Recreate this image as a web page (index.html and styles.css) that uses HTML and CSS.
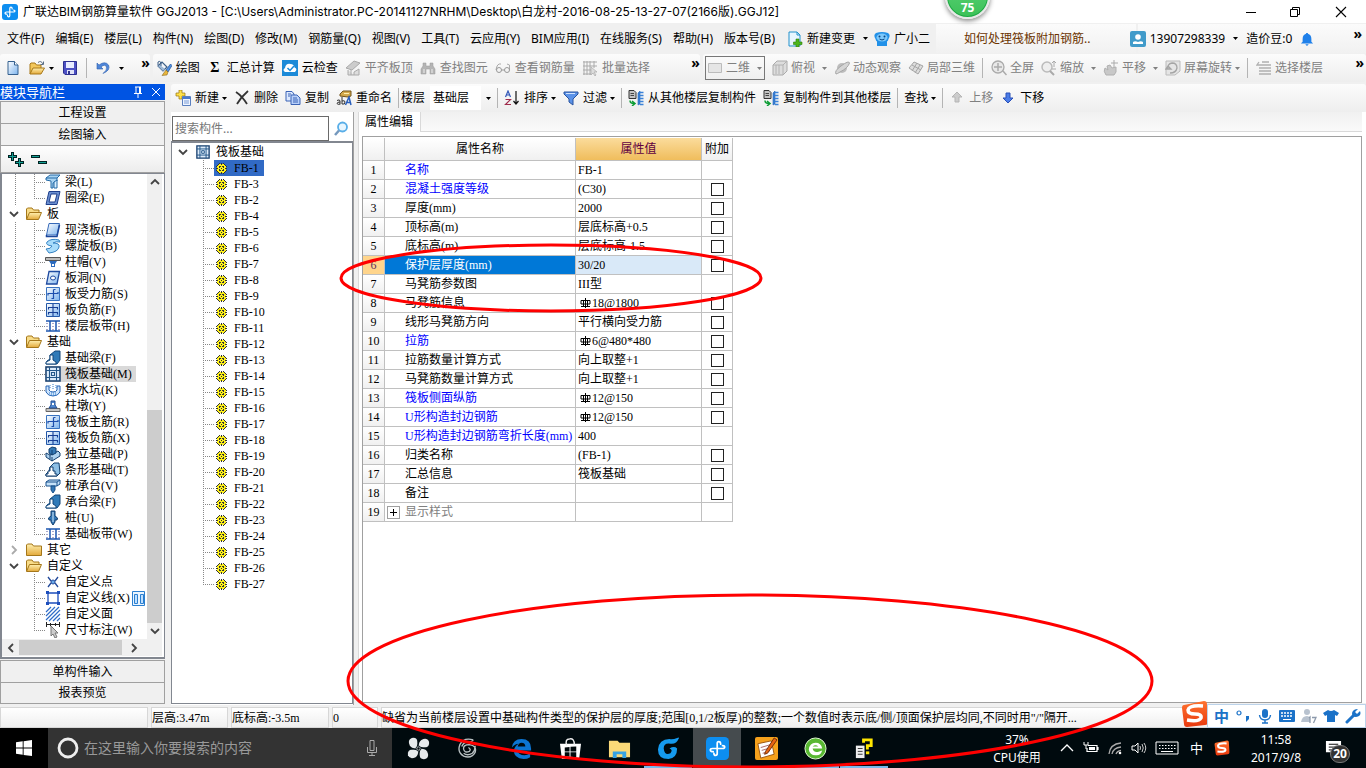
FILE: index.html
```html
<!DOCTYPE html>
<html lang="zh-CN">
<head>
<meta charset="utf-8">
<title>广联达BIM钢筋算量软件 GGJ2013</title>
<link rel="stylesheet" href="styles.css">
</head>
<body>
<svg class="defs" aria-hidden="true">
<defs>
<linearGradient id="blue" x1="0" y1="0" x2="1" y2="1"><stop offset="0" stop-color="#fff"/><stop offset="1" stop-color="#7db4ee"/></linearGradient>
<linearGradient id="gold" x1="0" y1="0" x2="0" y2="1"><stop offset="0" stop-color="#fff0b0"/><stop offset="1" stop-color="#e3a93a"/></linearGradient>
<linearGradient id="orange" x1="0" y1="0" x2="0" y2="1"><stop offset="0" stop-color="#ff7430"/><stop offset="1" stop-color="#e8380d"/></linearGradient>
<symbol id="app" viewBox="0 0 16 16"><rect width="16" height="16" rx="3" fill="#0d8ef0"/><path d="M10.200 5Q10.200 3.200 8.900 3.200Q7.800 3.200 7.800 4.500V11.500Q7.800 12.800 6.700 12.800Q5.500 12.800 5.500 11.300M5 10.200Q3 10.200 3 9Q3 8 4.500 8H11.500Q13 8 13 7Q13 6 11.500 6" fill="none" stroke="#fff" stroke-width="1.200" stroke-linecap="round"/></symbol>
<symbol id="new" viewBox="0 0 16 16"><path d="M3 1.500H9.500L13 5V14.500H3Z" fill="url(#blue)" stroke="#35608f"/><path d="M9.500 1.500V5H13" fill="#fff" stroke="#35608f"/></symbol>
<symbol id="open" viewBox="0 0 16 16"><path d="M1 14V4L2 3H6L7.500 5H12V8" fill="#f3c75a" stroke="#a8791a"/><path d="M1 14L4 8H15.500L12 14Z" fill="url(#gold)" stroke="#a8791a"/><path d="M9 2.500Q12 0 14 4M14.500 1.500V4.500H11.500" fill="none" stroke="#5a6f86"/></symbol>
<symbol id="save" viewBox="0 0 16 16"><path d="M1.500 1.500H14.500V14.500H3L1.500 13Z" fill="#4c50c4" stroke="#2d3090"/><path d="M4 2H12V8H4Z" fill="#e8ecff"/><path d="M5 10H12V14H5Z" fill="#dfe2f8"/><path d="M6 11H8V14H6Z" fill="#30338c"/></symbol>
<symbol id="undo" viewBox="0 0 16 16"><path d="M2 3V9H8L6 7Q10 3.500 11.500 7Q12.500 10 8 13.500Q16 10 13.500 5Q10 .5 4 5Z" fill="#4f86d8" stroke="#2d5fb0" stroke-width=".6"/></symbol>
<symbol id="paint" viewBox="0 0 16 16"><path d="M2 6L6 2L11 7L7 11Z" fill="#f2f5f9" stroke="#3c5f88" stroke-width="1.200"/><path d="M2 6L7 11L9 9L4 5Z" fill="#9db8d6"/><path d="M2 5V2Q4 0 5 3V6" fill="none" stroke="#3c5f88"/><path d="M14.500 4L16 5.500L12 12L10 10Z" fill="#4f8fe0" stroke="#1e4c8f" stroke-width=".7"/><path d="M10 10L12 12L11 15L6 15.500Z" fill="#e8b63c" stroke="#7a5a10" stroke-width=".5"/></symbol>
<symbol id="cloud" viewBox="0 0 16 16"><rect width="16" height="16" fill="#1c8ad8"/><path d="M3 12Q0 10 3 8Q4 3 8.500 4Q12 4 12.500 7.500Q16 9 13 12Z" fill="#fff"/><path d="M5.500 8L8 10.500L12 6" fill="none" stroke="#1c8ad8" stroke-width="1.500"/></symbol>
<symbol id="align" viewBox="0 0 16 16"><path d="M1 8L9 1L15 3L7 10Z" fill="#ccc" stroke="#aaa"/><path d="M3 10V15H14V9L9 12V15M6 10V15" fill="#ddd" stroke="#aaa"/></symbol>
<symbol id="find" viewBox="0 0 16 16"><path d="M3 3H6V6H10V3H13V6L15 9V14H10V9H6V14H1V9L3 6Z" fill="#b5b5b5" stroke="#999" stroke-width=".5"/><path d="M4 9V13M12 9V13" stroke="#eee"/></symbol>
<symbol id="glasses" viewBox="0 0 16 16"><path d="M1 10Q2 3 6 4M14.500 10V5L12 4" fill="none" stroke="#aaa"/><circle cx="4" cy="10" r="2.500" fill="none" stroke="#999"/><circle cx="12" cy="10" r="2.500" fill="none" stroke="#999"/><path d="M6.500 10H9.500" stroke="#999"/></symbol>
<symbol id="batch" viewBox="0 0 16 16"><path d="M1 2H15M1 6H15M1 10H9M1 14H9M2 1V15M5 1V15M8 1V15M12 1V8" fill="none" stroke="#aaa"/><path d="M9 7V15L11 13L13 16L14 15L12 12H15Z" fill="#ddd" stroke="#aaa" stroke-width=".7"/></symbol>
<symbol id="flat" viewBox="0 0 16 16"><path d="M1.500 3.500H14.500V12.500H1.500Z" fill="#e5e5e5" stroke="#bbb"/></symbol>
<symbol id="cube" viewBox="0 0 16 16"><path d="M1 5L5 1H15V11L11 15H1Z" fill="#ddd" stroke="#aaa"/><path d="M1 5H11V15M11 5L15 1M4 5V14M7 5V14" fill="none" stroke="#b2b2b2"/></symbol>
<symbol id="orbit" viewBox="0 0 16 16"><circle cx="8" cy="8" r="5" fill="#bdbdbd"/><path d="M2 14Q0 11 7 6Q15 0 15.500 3Q14 8 6 12Q3 14 2 14Z" fill="#d5d5d5" stroke="#a5a5a5"/></symbol>
<symbol id="local" viewBox="0 0 16 16"><path d="M1 8L6 2L15 6L10 14Z" fill="#ddd" stroke="#a5a5a5"/><path d="M4 5L13 10M9 3L4 11M12 5L7 13" stroke="#a5a5a5" fill="none"/></symbol>
<symbol id="full" viewBox="0 0 16 16"><circle cx="7" cy="7" r="6" fill="#e8e8e8" stroke="#aaa" stroke-width="1.300"/><path d="M7 3V11M3 7H11M12 11L15.500 15" stroke="#aaa" stroke-width="1.500"/></symbol>
<symbol id="zoomi" viewBox="0 0 16 16"><circle cx="6" cy="7" r="5" fill="#eee" stroke="#bbb" stroke-width="1.500"/><path d="M9 11L13 15" stroke="#aaa" stroke-width="2"/><path d="M13 1V7M11 3L13 1L15 3M11 9H15" stroke="#aaa" fill="none"/></symbol>
<symbol id="pan" viewBox="0 0 16 16"><path d="M3 15Q0 11 2 8L5 10L4 6L7 5L9 8L13 7L13 12L11 15Z" fill="#c8c8c8" stroke="#b0b0b0"/><path d="M11 0V7M8 3H15" stroke="#aaa"/></symbol>
<symbol id="rotate" viewBox="0 0 16 16"><path d="M1 1H15V11L10 15H1Z" fill="#e5e5e5" stroke="#bbb"/><path d="M3 9Q2 4 7 3Q12 3 12 8Q11 13 5 13M3 6L6 9H1Z" fill="none" stroke="#a5a5a5" stroke-width="1.300"/></symbol>
<symbol id="floors" viewBox="0 0 16 16"><path d="M3 2L1 5H15M3 8H15M3 11H15M3 14H15M6 2H13" fill="none" stroke="#b0b0b0" stroke-width="1.300"/></symbol>
<symbol id="add" viewBox="0 0 16 16"><path d="M4 0H7V3H10V6H7V9H4V6H1V3H4Z" fill="#ffe14a" stroke="#97730d" stroke-width=".7"/><path d="M7.500 6.500H15.500V15.500H7.500Z" fill="#eef4ff" stroke="#5a7fbf"/><path d="M7.500 8H15.500" stroke="#4978cf" stroke-width="2"/><path d="M9 11H14M9 13H14" stroke="#7a9cd6"/></symbol>
<symbol id="del" viewBox="0 0 16 16"><path d="M2 2Q8 6 13 14M14 1Q7 7 3 14" fill="none" stroke="#333" stroke-width="1.800"/></symbol>
<symbol id="copy" viewBox="0 0 16 16"><path d="M1 1.500H7L9 4V11H1Z" fill="#dce9ff" stroke="#3b63b5"/><path d="M6 5H12L15 8V14.500H6Z" fill="#b8d0fa" stroke="#3b63b5"/><path d="M8 8H12M8 10H13M8 12H13M3 4H6M3 6H5" stroke="#3b63b5"/></symbol>
<symbol id="rename" viewBox="0 0 16 16"><path d="M4 4L7 1H15V6L12 7L4 6Z" fill="#d3a94b" stroke="#71531b"/><path d="M8 3.500H13" stroke="#fff0b0"/><path d="M1 10.500Q4 9 4 11V14.500M4 12Q1 12 1 13.500Q2 15 4 14M6 7V14Q9 15 9 12Q9 10 6 11" fill="none" stroke="#333"/><path d="M9.500 15L13 7L15 15M10.500 12.500H15" fill="none" stroke="#2a5fbc" stroke-width="1.500"/></symbol>
<symbol id="sort" viewBox="0 0 16 16"><path d="M1.500 7L4 1L6.500 7M2.500 5H6" fill="none" stroke="#3157b8" stroke-width="1.200"/><path d="M1.500 9.500H6.500L1.500 14.500H7" fill="none" stroke="#a02c4c" stroke-width="1.200"/><path d="M12 1V14M9.500 11L12 14L14.500 11" fill="none" stroke="#111" stroke-width="1.200"/></symbol>
<symbol id="filter" viewBox="0 0 16 16"><path d="M1 2H15V4L10 9V15L6 12V9L1 4Z" fill="#5b92e8" stroke="#28539e"/><path d="M3 3.500H12" stroke="#cfe3ff"/></symbol>
<symbol id="fromfl" viewBox="0 0 16 16"><path d="M1 .5H6L8 2.500V8.500H1Z" fill="#c4c4c4" stroke="#333"/><path d="M2.500 3.500H6M2.500 5.500H6" stroke="#444"/><path d="M2 10.500Q2 13.500 6 13.500M4 11L7 13.500L4 16" fill="none" stroke="#0b9c34" stroke-width="1.500"/><path d="M10 3L12 1V14L10 15Z" fill="#3b82d8" stroke="#2566b8" stroke-width=".6"/><path d="M12 2.500H15.500M12 5.500H15.500M12 8.500H15.500M12 11.500H15.500M12 14.500H15.500" stroke="#3b82d8" stroke-width="1.500"/></symbol>
<symbol id="up" viewBox="0 0 16 16"><path d="M8 2L13 7H10V12H6V7H3Z" fill="#ccc" stroke="#b5b5b5"/></symbol>
<symbol id="down" viewBox="0 0 16 16"><path d="M8 13L13 8H10V3H6V8H3Z" fill="#4a7de8" stroke="#2a50b8"/></symbol>
<symbol id="change" viewBox="0 0 16 16"><path d="M2 1H10L13 4V15H2Z" fill="#e8f6ff" stroke="#2291cc"/><path d="M10 1V4H13" fill="none" stroke="#2291cc"/><path d="M9 8H12V11H15V13.500H12V16H9V13.500H6.500V11H9Z" fill="#4cb51c" stroke="#2b7d0b" stroke-width=".6"/></symbol>
<symbol id="bot" viewBox="0 0 16 16"><path d="M2 2Q8 0 14 2Q17 4 14.500 8Q14 10 13 10.500V15H3V10.500Q2 10 1.500 8Q-1 4 2 2Z" fill="#2291e8"/><ellipse cx="8" cy="6.500" rx="5.500" ry="4" fill="#7cc8fb"/><circle cx="5.500" cy="5.500" r="1" fill="#064684"/><circle cx="10.500" cy="5.500" r="1" fill="#064684"/><path d="M5.500 8Q8 10 10.500 8" stroke="#064684" fill="none"/></symbol>
<symbol id="user" viewBox="0 0 16 16"><rect width="16" height="16" rx="2" fill="#419bca"/><circle cx="8" cy="6" r="2.800" fill="#fff"/><path d="M3 13V11Q5 9.500 8 11Q11 9.500 13 11V13Z" fill="#fff"/></symbol>
<symbol id="bell" viewBox="0 0 16 16"><path d="M7 1H9V2Q13 3 13 8V11L15 13H1L3 11V8Q3 3 7 2ZM6 14H10L8 16Z" fill="#1f80ea"/></symbol>
<symbol id="folder" viewBox="0 0 16 14"><path d="M.5 12V2L1.500 1H6L7.500 3H15.500V12.500H.5Z" fill="url(#gold)" stroke="#a5771a"/></symbol>
<symbol id="folderopen" viewBox="0 0 16 14"><path d="M.5 12V2L1.500 1H6L7.500 3H13V6" fill="#f8dc88" stroke="#a5771a"/><path d="M.5 12.500L3.500 5.500H15.500L12.500 12.500Z" fill="url(#gold)" stroke="#a5771a"/></symbol>
<symbol id="beam" viewBox="0 0 16 16"><path d="M1 4L5 1H15L12 4V7L8 9V14H6V7L1 6Z" fill="#a8d3f2" stroke="#236aa8"/><path d="M9 14V8L12 6V14Z" fill="#d9efff" stroke="#236aa8"/><path d="M1 4H12L15 1" fill="none" stroke="#236aa8"/></symbol>
<symbol id="ring" viewBox="0 0 16 16"><path d="M4 1.500H15L12 14.500H1Z" fill="#6b8fd0" stroke="#1e3f8c"/><path d="M6 4H12L10 12H4Z" fill="#fff" stroke="#1e3f8c"/></symbol>
<symbol id="slab" viewBox="0 0 16 16"><path d="M4 1.500H14.500L12 13H1.500Z" fill="url(#blue)" stroke="#3669b8"/><path d="M1.500 13V14.500H12L14.500 3" fill="none" stroke="#1b469b" stroke-width="1.500"/></symbol>
<symbol id="spiral" viewBox="0 0 16 16"><path d="M14 2Q6 0 2 4Q0 7 7 8Q6 11 1 11L4 15Q13 14 14 9Q15 5 8 5Q11 3 15 4Z" fill="#a8dcfb" stroke="#3583c4"/></symbol>
<symbol id="cap" viewBox="0 0 16 16"><path d="M.5 3.500H15.500V6.500H.5Z" fill="#bbb" stroke="#555"/><path d="M4 7H12L10 10V13H6V10Z" fill="#2c6cc0"/><path d="M7 10H9V12H7Z" fill="#fff"/></symbol>
<symbol id="hole" viewBox="0 0 16 16"><path d="M4 1.500H14.500L12 14H1.500Z" fill="url(#blue)" stroke="#1e4aa0" stroke-width="1.300"/><ellipse cx="8" cy="8" rx="2.500" ry="2" fill="#fff" stroke="#1e4aa0"/></symbol>
<symbol id="bars" viewBox="0 0 16 16"><path d="M1.500 1.500H14.500V14.500H1.500Z" fill="url(#blue)" stroke="#3973c0"/><path d="M3 9.500V7.500H13V6M8.500 3.500V12.500H6.500M8.500 3.500H10.500" fill="none" stroke="#1c4fae" stroke-width="1.200"/></symbol>
<symbol id="neg" viewBox="0 0 16 16"><path d="M1.500 1.500H14.500V14.500H1.500Z" fill="url(#blue)" stroke="#2458a8"/><path d="M8 2V14M3.500 7.500V5.500H12.500V7.500M3.500 12.500V10.500H12.500V12.500" fill="none" stroke="#173f95" stroke-width="1.100"/></symbol>
<symbol id="strip" viewBox="0 0 16 16"><path d="M1 3H15M1 13H15" stroke="#1b56b0" stroke-width="1.500"/><path d="M5 3V13M11 3V13" stroke="#1b56b0" stroke-width="1.500"/><path d="M2 5V12M14 5V12M8 5V12" stroke="#559" stroke-dasharray="1 2"/></symbol>
<symbol id="fbeam" viewBox="0 0 16 16"><path d="M5 5L10 1H15V10L12 14H1L2 11L5 9Z" fill="#2f7ab8" stroke="#12467b"/><path d="M5 5H8V10L11 12V14H1V12L5 10Z" fill="#f5fbff" stroke="#12467b"/></symbol>
<symbol id="raft" viewBox="0 0 16 16"><path d="M1 1H15V15H1Z" fill="#ddecfb" stroke="#173f6f" stroke-width="1.500"/><path d="M4.500 1V15M11.500 1V15M1 4.500H15M1 11.500H15M6.500 6.500H9.500V9.500H6.500Z" fill="none" stroke="#245789" stroke-width="1.100"/></symbol>
<symbol id="pit" viewBox="0 0 16 16"><path d="M1 4L4 4V8Q5 10 8 10Q11 10 12 8V4L15 4V10Q13 14 8 14Q3 14 1 10Z" fill="#cfe4fb" stroke="#2463b3"/><path d="M5 3V6M8 2V7M11 3V6M4 11H12M6 13H11" stroke="#2d7ccc" stroke-dasharray="1 1"/></symbol>
<symbol id="pier" viewBox="0 0 16 16"><path d="M1 10.500H15V13.500H1Z" fill="#c4c4c4" stroke="#666"/><path d="M4 10L6 7V3H10V7L12 10Z" fill="#5088d0" stroke="#224c92"/><path d="M7 5H9V7H7Z" fill="#fff"/></symbol>
<symbol id="indep" viewBox="0 0 16 16"><path d="M1 7L5 9L13 5L15 7V10L7 15L1 11Z" fill="#aed2ef" stroke="#123f6e"/><path d="M4 3L7 1L11 2V7L7 9L4 7Z" fill="#3479b5" stroke="#123f6e"/><path d="M7 4V9M5 9V13M7 11V15" stroke="#123f6e"/></symbol>
<symbol id="stripf" viewBox="0 0 16 16"><path d="M5 5L9 1H14L15 11L12 14H1V12L4 9Z" fill="#8dbfe5" stroke="#123f6e"/><path d="M5 5H8V9H10V12H12V14H1V12H3V9H5Z" fill="#fff" stroke="#123f6e"/></symbol>
<symbol id="pilecap" viewBox="0 0 16 16"><path d="M1 4L4 2H15V6L12 8H1Z" fill="#c5e1f8" stroke="#19508c"/><path d="M1 4H12V8M12 4L15 2" fill="none" stroke="#19508c"/><path d="M6 8H10V12L8 15L6 12Z" fill="#3377b4" stroke="#19508c"/></symbol>
<symbol id="pile" viewBox="0 0 16 16"><path d="M6 1H10V6Q14 8 12 10H10V12L8 15L6 12V10H4Q2 8 6 6Z" fill="#3276b4" stroke="#123f6e"/><path d="M8 2V12" stroke="#d8efff"/></symbol>
<symbol id="point" viewBox="0 0 16 16"><path d="M3 3L6 7M13 3L10 7M3 13L6 9M13 13L10 9" stroke="#234a9a" stroke-width="1.300"/><circle cx="8" cy="8" r="2" fill="#69aaea" stroke="#234a9a"/></symbol>
<symbol id="line" viewBox="0 0 16 16"><path d="M3 3H13V13H3Z" fill="#fff" stroke="#1d4ebc" stroke-width="1.300"/><path d="M1 1H4V4H1ZM12 1H15V4H12ZM1 12H4V15H1ZM12 12H15V15H12Z" fill="#1d4ebc"/></symbol>
<symbol id="hatch" viewBox="0 0 16 16"><path d="M1 6L6 1M1 10L10 1M1 14L14 1M4 15L15 4M8 15L15 8M12 15L15 12" stroke="#2e6cc8" stroke-width="1.200"/></symbol>
<symbol id="dim" viewBox="0 0 16 16"><path d="M1.500 0V5M14.500 0V5M1 2.500H15M5.500 1V4M10.500 1V4" stroke="#222"/><path d="M6 4V14L8 12L10 16L12 15L10 11H13Z" fill="#ccc" stroke="#777"/></symbol>
<symbol id="gear" viewBox="0 0 11 11"><path d="M3 1H8L10 3V8L8 10H3L1 8V3Z" fill="#fff21a"/><path d="M3 0H4V1H3ZM5 0H6V2H5ZM7 0H8V1H7ZM2 1H3V2H2ZM8 1H9V2H8ZM1 2H2V3H1ZM9 2H10V3H9ZM0 3H1V4H0ZM10 3H11V4H10ZM0 5H2V6H0ZM9 5H11V6H9ZM0 7H1V8H0ZM10 7H11V8H10ZM1 8H2V9H1ZM9 8H10V9H9ZM2 9H3V10H2ZM8 9H9V10H8ZM3 10H4V11H3ZM5 9H6V11H5ZM7 10H8V11H7ZM3 3H5V4H4V5H3ZM6 3H8V5H7V4H6ZM3 6H4V7H5V8H3ZM7 6H8V8H6V7H7ZM5 5H6V6H5Z" fill="#333"/></symbol>
<symbol id="rebar" viewBox="0 0 11 10"><path d="M5.500 0V10M1 2.500H10V6H1ZM3.500 2.500V6M7.500 2.500V8.500M3.500 6V8.500M1 8.500H10" fill="none" stroke="#000"/></symbol>
<symbol id="chev" viewBox="0 0 10 10"><path d="M1 3L5 7L9 3" fill="none" stroke="currentColor" stroke-width="1.800"/></symbol>
<symbol id="sogou" viewBox="0 0 28 28"><path d="M3 5L23 1Q26 1 26 4L27 22Q27 25 24 25L6 27Q3 27 3 24L1 8Q1 5 3 5Z" fill="url(#orange)"/><path d="M22 6Q8 5 7 10Q7 14 14 14Q21 14 20 18Q18 22 6 20" fill="none" stroke="#fff" stroke-width="3.500"/></symbol>
<symbol id="caret" viewBox="0 0 5 3"><path d="M0 0H5L2.500 3Z" fill="currentColor"/></symbol>
</defs>
</svg>

<div class="desktop">
<header class="titlebar">
  <svg class="i16"><use href="#app"/></svg>
  <h1>广联达BIM钢筋算量软件 GGJ2013 - [C:\Users\Administrator.PC-20141127NRHM\Desktop\白龙村-2016-08-25-13-27-07(2166版).GGJ12]</h1>
  <div class="winctl">
    <button aria-label="最小化"><svg viewBox="0 0 12 12"><path d="M1 6.500H11" stroke="#000"/></svg></button>
    <button aria-label="还原"><svg viewBox="0 0 12 12"><path d="M1.500 3.500H8.500V10.500H1.500ZM3.500 3.500V1.500H10.500V8.500H8.500" fill="none" stroke="#000"/></svg></button>
    <button aria-label="关闭"><svg viewBox="0 0 12 12"><path d="M1 1L11 11M11 1L1 11" stroke="#000" stroke-width="1.100"/></svg></button>
  </div>
</header>

<nav class="menubar">
  <div class="menus">
    <button>文件(F)</button><button>编辑(E)</button><button>楼层(L)</button><button>构件(N)</button><button>绘图(D)</button><button>修改(M)</button><button>钢筋量(Q)</button><button>视图(V)</button><button>工具(T)</button><button>云应用(Y)</button><button>BIM应用(I)</button><button>在线服务(S)</button><button>帮助(H)</button><button>版本号(B)</button>
  </div>
  <button class="tool change"><svg class="i16"><use href="#change"/></svg>新建变更<svg class="car far"><use href="#caret"/></svg></button>
  <button class="tool"><svg class="i16"><use href="#bot"/></svg>广小二</button>
  <a class="tip" href="#">如何处理筏板附加钢筋..</a>
  <div class="account">
    <button class="tool"><svg class="i16"><use href="#user"/></svg>13907298339<svg class="car far"><use href="#caret"/></svg></button>
    <button class="tool">造价豆:0<svg class="i16 bell"><use href="#bell"/></svg></button>
    <button class="more">»</button>
  </div>
</nav>

<div class="toolrow">
  <div class="strip quick">
    <button class="tool" aria-label="新建"><svg class="i16"><use href="#new"/></svg></button>
    <button class="tool" aria-label="打开"><svg class="i16"><use href="#open"/></svg><svg class="car"><use href="#caret"/></svg></button>
    <button class="tool" aria-label="保存"><svg class="i16"><use href="#save"/></svg></button>
    <i class="sep"></i>
    <button class="tool" aria-label="撤销"><svg class="i16"><use href="#undo"/></svg><svg class="car far"><use href="#caret"/></svg></button>
    <button class="more">»</button>
  </div>
  <div class="strip draw">
    <button class="tool"><svg class="i16"><use href="#paint"/></svg>绘图</button>
    <button class="tool"><b class="sigma">Σ</b>汇总计算</button>
    <button class="tool"><svg class="i16"><use href="#cloud"/></svg>云检查</button>
    <button class="tool off"><svg class="i16"><use href="#align"/></svg>平齐板顶</button>
    <button class="tool off"><svg class="i16"><use href="#find"/></svg>查找图元</button>
    <button class="tool off"><svg class="i16"><use href="#glasses"/></svg>查看钢筋量</button>
    <button class="tool off"><svg class="i16"><use href="#batch"/></svg>批量选择</button>
    <button class="more">»</button>
  </div>
  <div class="strip view">
    <button class="tool off boxed"><svg class="i16"><use href="#flat"/></svg>二维<svg class="car far"><use href="#caret"/></svg></button>
    <button class="tool off"><svg class="i16"><use href="#cube"/></svg>俯视<svg class="car far"><use href="#caret"/></svg></button>
    <button class="tool off"><svg class="i16"><use href="#orbit"/></svg>动态观察</button>
    <button class="tool off"><svg class="i16"><use href="#local"/></svg>局部三维</button>
    <i class="sep"></i>
    <button class="tool off"><svg class="i16"><use href="#full"/></svg>全屏</button>
    <button class="tool off"><svg class="i16"><use href="#zoomi"/></svg>缩放<svg class="car far"><use href="#caret"/></svg></button>
    <button class="tool off"><svg class="i16"><use href="#pan"/></svg>平移<svg class="car far"><use href="#caret"/></svg></button>
    <button class="tool off"><svg class="i16"><use href="#rotate"/></svg>屏幕旋转<svg class="car"><use href="#caret"/></svg></button>
    <i class="sep"></i>
    <button class="tool off"><svg class="i16"><use href="#floors"/></svg>选择楼层</button>
    <button class="more">»</button>
  </div>
</div>

<div class="workspace">
<aside class="modules">
  <div class="panelhead"><span>模块导航栏</span><svg viewBox="0 0 10 12"><path d="M2 1H8M3 1V7M6.500 1V7M7.500 1V7M1 7.500H9M5 7V12" fill="none" stroke="#fff"/></svg><svg viewBox="0 0 10 12"><path d="M1 2L9 10M9 2L1 10" stroke="#fff"/></svg></div>
  <button class="wide">工程设置</button>
  <button class="wide">绘图输入</button>
  <div class="expand"><svg viewBox="0 0 42 18"><path d="M4 1H7V4H10V7H7V10H4V7H1V4H4ZM11 7H14V10H17V13H14V16H11V13H8V10H11ZM24 4H33V7H24ZM31 10H40V13H31Z" fill="#022"/><path d="M5 2H6V5H9V6H6V9H5V6H2V5H5ZM12 8H13V11H16V12H13V15H12V12H9V11H12ZM25 5H32V6H25ZM32 11H39V12H32Z" fill="#12a094"/></svg></div>
  <div class="treebox">
    <div class="treemain">
    <ul class="tree">
      <li class="leaf bar"><svg class="i16"><use href="#beam"/></svg>梁(L)</li>
      <li class="leaf bar last"><svg class="i16"><use href="#ring"/></svg>圈梁(E)</li>
      <li class="branch"><svg class="tw"><use href="#chev"/></svg><svg class="fold"><use href="#folderopen"/></svg>板</li>
      <li class="leaf bar"><svg class="i16"><use href="#slab"/></svg>现浇板(B)</li>
      <li class="leaf bar"><svg class="i16"><use href="#spiral"/></svg>螺旋板(B)</li>
      <li class="leaf bar"><svg class="i16"><use href="#cap"/></svg>柱帽(V)</li>
      <li class="leaf bar"><svg class="i16"><use href="#hole"/></svg>板洞(N)</li>
      <li class="leaf bar"><svg class="i16"><use href="#bars"/></svg>板受力筋(S)</li>
      <li class="leaf bar"><svg class="i16"><use href="#neg"/></svg>板负筋(F)</li>
      <li class="leaf bar last"><svg class="i16"><use href="#strip"/></svg>楼层板带(H)</li>
      <li class="branch"><svg class="tw"><use href="#chev"/></svg><svg class="fold"><use href="#folderopen"/></svg>基础</li>
      <li class="leaf bar"><svg class="i16"><use href="#fbeam"/></svg>基础梁(F)</li>
      <li class="leaf bar"><span class="current"><svg class="i16"><use href="#raft"/></svg>筏板基础(M)</span></li>
      <li class="leaf bar"><svg class="i16"><use href="#pit"/></svg>集水坑(K)</li>
      <li class="leaf bar"><svg class="i16"><use href="#pier"/></svg>柱墩(Y)</li>
      <li class="leaf bar"><svg class="i16"><use href="#bars"/></svg>筏板主筋(R)</li>
      <li class="leaf bar"><svg class="i16"><use href="#neg"/></svg>筏板负筋(X)</li>
      <li class="leaf bar"><svg class="i16"><use href="#indep"/></svg>独立基础(P)</li>
      <li class="leaf bar"><svg class="i16"><use href="#stripf"/></svg>条形基础(T)</li>
      <li class="leaf bar"><svg class="i16"><use href="#pilecap"/></svg>桩承台(V)</li>
      <li class="leaf bar"><svg class="i16"><use href="#fbeam"/></svg>承台梁(F)</li>
      <li class="leaf bar"><svg class="i16"><use href="#pile"/></svg>桩(U)</li>
      <li class="leaf bar last"><svg class="i16"><use href="#strip"/></svg>基础板带(W)</li>
      <li class="branch"><svg class="tw closed"><use href="#chev"/></svg><svg class="fold"><use href="#folder"/></svg>其它</li>
      <li class="branch"><svg class="tw"><use href="#chev"/></svg><svg class="fold"><use href="#folderopen"/></svg>自定义</li>
      <li class="leaf"><svg class="i16"><use href="#point"/></svg>自定义点</li>
      <li class="leaf"><svg class="i16"><use href="#line"/></svg>自定义线(X)<svg class="cols" viewBox="0 0 13 15"><path d="M.5 .5H12.500V14.500H.5Z" fill="#eaf5ff" stroke="#2b7fd0"/><path d="M2.500 3.500H5.500V12.500H2.500ZM8.500 3.500H11.500V12.500H8.500Z" fill="#bfe0ff" stroke="#2b7fd0"/></svg></li>
      <li class="leaf"><svg class="i16"><use href="#hatch"/></svg>自定义面</li>
      <li class="leaf last"><svg class="i16"><use href="#dim"/></svg>尺寸标注(W)</li>
    </ul>
    <div class="vscroll"><svg class="tw flip"><use href="#chev"/></svg><i></i><svg class="tw"><use href="#chev"/></svg></div>
    </div>
    <div class="hscroll"><svg class="tw lft"><use href="#chev"/></svg><i></i><svg class="tw rgt"><use href="#chev"/></svg></div>
  </div>
  <button class="wide">单构件输入</button>
  <button class="wide">报表预览</button>
</aside>

<main class="content">
  <div class="strip edit">
    <button class="tool"><svg class="i16"><use href="#add"/></svg>新建<svg class="car"><use href="#caret"/></svg></button>
    <button class="tool"><svg class="i16"><use href="#del"/></svg>删除</button>
    <button class="tool"><svg class="i16"><use href="#copy"/></svg>复制</button>
    <button class="tool"><svg class="i16"><use href="#rename"/></svg>重命名</button>
    <i class="sep"></i>
    <label class="floor">楼层 <select><option>基础层</option></select><svg class="car"><use href="#caret"/></svg></label>
    <i class="sep"></i>
    <button class="tool"><svg class="i16"><use href="#sort"/></svg>排序<svg class="car"><use href="#caret"/></svg></button>
    <button class="tool"><svg class="i16"><use href="#filter"/></svg>过滤<svg class="car"><use href="#caret"/></svg></button>
    <i class="sep"></i>
    <button class="tool"><svg class="i16"><use href="#fromfl"/></svg>从其他楼层复制构件</button>
    <button class="tool"><svg class="i16"><use href="#fromfl"/></svg>复制构件到其他楼层</button>
    <i class="sep"></i>
    <button class="tool">查找<svg class="car"><use href="#caret"/></svg></button>
    <i class="sep"></i>
    <button class="tool off"><svg class="i16"><use href="#up"/></svg>上移</button>
    <button class="tool"><svg class="i16"><use href="#down"/></svg>下移</button>
  </div>
  <div class="panes">
    <section class="members">
      <div class="search"><input type="text" placeholder="搜索构件..." aria-label="搜索构件"><button aria-label="搜索"><svg viewBox="0 0 16 16"><circle cx="9.500" cy="6" r="4.500" fill="#e7f6ff" stroke="#59aee8" stroke-width="1.800"/><path d="M6 9.500L2 14" stroke="#7598bd" stroke-width="2.500"/></svg></button></div>
      <ul class="list">
        <li class="root"><svg class="tw"><use href="#chev"/></svg><svg class="i16"><use href="#raft"/></svg>筏板基础</li>
        <li><span class="sel"><svg><use href="#gear"/></svg>FB-1</span></li>
        <li><span><svg><use href="#gear"/></svg>FB-3</span></li>
        <li><span><svg><use href="#gear"/></svg>FB-2</span></li>
        <li><span><svg><use href="#gear"/></svg>FB-4</span></li>
        <li><span><svg><use href="#gear"/></svg>FB-5</span></li>
        <li><span><svg><use href="#gear"/></svg>FB-6</span></li>
        <li><span><svg><use href="#gear"/></svg>FB-7</span></li>
        <li><span><svg><use href="#gear"/></svg>FB-8</span></li>
        <li><span><svg><use href="#gear"/></svg>FB-9</span></li>
        <li><span><svg><use href="#gear"/></svg>FB-10</span></li>
        <li><span><svg><use href="#gear"/></svg>FB-11</span></li>
        <li><span><svg><use href="#gear"/></svg>FB-12</span></li>
        <li><span><svg><use href="#gear"/></svg>FB-13</span></li>
        <li><span><svg><use href="#gear"/></svg>FB-14</span></li>
        <li><span><svg><use href="#gear"/></svg>FB-15</span></li>
        <li><span><svg><use href="#gear"/></svg>FB-16</span></li>
        <li><span><svg><use href="#gear"/></svg>FB-17</span></li>
        <li><span><svg><use href="#gear"/></svg>FB-18</span></li>
        <li><span><svg><use href="#gear"/></svg>FB-19</span></li>
        <li><span><svg><use href="#gear"/></svg>FB-20</span></li>
        <li><span><svg><use href="#gear"/></svg>FB-21</span></li>
        <li><span><svg><use href="#gear"/></svg>FB-22</span></li>
        <li><span><svg><use href="#gear"/></svg>FB-23</span></li>
        <li><span><svg><use href="#gear"/></svg>FB-24</span></li>
        <li><span><svg><use href="#gear"/></svg>FB-25</span></li>
        <li><span><svg><use href="#gear"/></svg>FB-26</span></li>
        <li class="last"><span><svg><use href="#gear"/></svg>FB-27</span></li>
      </ul>
    </section>
    <section class="props">
      <div class="tabs"><button class="tab">属性编辑</button></div>
      <div class="sheet">
        <table>
          <thead><tr><th class="num"></th><th class="name">属性名称</th><th class="val">属性值</th><th class="ext">附加</th></tr></thead>
          <tbody>
            <tr><th>1</th><td class="link">名称</td><td>FB-1</td><td></td></tr>
            <tr><th>2</th><td class="link">混凝土强度等级</td><td>(C30)</td><td><input type="checkbox" aria-label="附加 混凝土强度等级"></td></tr>
            <tr><th>3</th><td>厚度(mm)</td><td>2000</td><td><input type="checkbox" aria-label="附加 厚度"></td></tr>
            <tr><th>4</th><td>顶标高(m)</td><td>层底标高+0.5</td><td><input type="checkbox" aria-label="附加 顶标高"></td></tr>
            <tr><th>5</th><td>底标高(m)</td><td>层底标高-1.5</td><td><input type="checkbox" aria-label="附加 底标高"></td></tr>
            <tr class="active"><th>6</th><td>保护层厚度(mm)</td><td>30/20</td><td><input type="checkbox" aria-label="附加 保护层厚度"></td></tr>
            <tr><th>7</th><td>马凳筋参数图</td><td>III型</td><td></td></tr>
            <tr><th>8</th><td>马凳筋信息</td><td><svg class="rb"><use href="#rebar"/></svg>18@1800</td><td><input type="checkbox" aria-label="附加 马凳筋信息"></td></tr>
            <tr><th>9</th><td>线形马凳筋方向</td><td>平行横向受力筋</td><td><input type="checkbox" aria-label="附加 线形马凳筋方向"></td></tr>
            <tr><th>10</th><td class="link">拉筋</td><td><svg class="rb"><use href="#rebar"/></svg>6@480*480</td><td><input type="checkbox" aria-label="附加 拉筋"></td></tr>
            <tr><th>11</th><td>拉筋数量计算方式</td><td>向上取整+1</td><td><input type="checkbox" aria-label="附加 拉筋数量计算方式"></td></tr>
            <tr><th>12</th><td>马凳筋数量计算方式</td><td>向上取整+1</td><td><input type="checkbox" aria-label="附加 马凳筋数量计算方式"></td></tr>
            <tr><th>13</th><td class="link">筏板侧面纵筋</td><td><svg class="rb"><use href="#rebar"/></svg>12@150</td><td><input type="checkbox" aria-label="附加 筏板侧面纵筋"></td></tr>
            <tr><th>14</th><td class="link">U形构造封边钢筋</td><td><svg class="rb"><use href="#rebar"/></svg>12@150</td><td><input type="checkbox" aria-label="附加 U形构造封边钢筋"></td></tr>
            <tr><th>15</th><td class="link">U形构造封边钢筋弯折长度(mm)</td><td>400</td><td></td></tr>
            <tr><th>16</th><td>归类名称</td><td>(FB-1)</td><td><input type="checkbox" aria-label="附加 归类名称"></td></tr>
            <tr><th>17</th><td>汇总信息</td><td>筏板基础</td><td><input type="checkbox" aria-label="附加 汇总信息"></td></tr>
            <tr><th>18</th><td>备注</td><td></td><td><input type="checkbox" aria-label="附加 备注"></td></tr>
            <tr><th>19</th><td class="group"><button aria-label="展开"><svg viewBox="0 0 11 11"><path d="M2 5.500H9M5.500 2V9" stroke="#000"/></svg></button>显示样式</td><td></td><td></td></tr>
          </tbody>
        </table>
      </div>
    </section>
  </div>
</main>
</div>

<footer class="status">
  <span class="s1"></span><span class="s2">层高:3.47m</span><span class="s3">底标高:-3.5m</span><span class="s4">0</span><span class="s5">缺省为当前楼层设置中基础构件类型的保护层的厚度;范围[0,1/2板厚)的整数;一个数值时表示底/侧/顶面保护层均同,不同时用"/"隔开...</span>
</footer>

<div class="taskbar">
  <button class="start" aria-label="开始"><svg viewBox="0 0 16 16"><path d="M0 2.300L6.700 1.300V7.600H0ZM7.600 1.200L16 0V7.600H7.600ZM0 8.500H6.700V14.800L0 13.800ZM7.600 8.500H16V16L7.600 14.900Z" fill="#fff"/></svg></button>
  <label class="cortana"><svg viewBox="0 0 22 22"><circle cx="11" cy="11" r="9" fill="none" stroke="#eee" stroke-width="2.800"/></svg><input type="text" placeholder="在这里输入你要搜索的内容"><svg class="mic" viewBox="0 0 12 18"><path d="M4 1.500H8V11.500H4ZM1.500 8V13.500H10.500V8M6 14V16.500M3 16.500H9" fill="none" stroke="#aaa"/></svg></label>
  <div class="apps">
    <button aria-label="应用"><svg viewBox="0 0 24 24"><g fill="#e6eaec"><path d="M11 12Q5 12 3 9Q0 3 5 1Q11 0 11 6Z"/><path d="M12 11Q12 5 15 3Q21 0 23 5Q24 11 18 11Z"/><path d="M13 12Q19 12 21 15Q24 21 19 23Q13 24 13 18Z"/><path d="M12 13Q12 19 9 21Q3 24 1 19Q0 13 6 13Z"/></g><path d="M11 1Q13 8 9 12M23 11Q16 13 12 9M13 23Q11 16 15 12M1 13Q8 11 12 15" fill="none" stroke="#011015" stroke-width="1"/></svg></button>
    <button aria-label="应用"><svg viewBox="0 0 24 24"><path d="M18 3Q8 0 4 8Q1 16 8 20Q16 23 20 16Q22 9 14 8Q7 8 8 13Q9 17 14 15Q16 13 13 11M18 3Q16 6 13 5Q8 5 6 10M20 9Q20 14 17 17Q12 20 8 17" fill="none" stroke="#b8c0c2" stroke-width="1.400"/></svg></button>
  </div>
  <div class="apps pinned">
    <button aria-label="Edge"><svg viewBox="0 0 24 24"><path d="M2 11Q3 2 12 2Q22 2 22 12V14H8Q9 19 15 19Q18 19 21 17V21Q18 23 14 23Q4 22 4 14Q5 9 9 7Q5 7 2 11ZM8 10H16Q16 6 12 6Q9 6 8 10Z" fill="#0c75d2"/></svg></button>
    <button aria-label="应用商店"><svg viewBox="0 0 24 24"><path d="M1 7H23L21 23H3Z" fill="#fff"/><path d="M8 9Q6 2 11 2Q16 1 16 8" fill="none" stroke="#eee" stroke-width="1.500"/><path d="M6 11L11 10.500V15H6ZM12 10.300L18 10V15H12ZM6 16H11V20.500L6 20ZM12 16H18V21L12 20.500Z" fill="#00090c"/></svg></button>
    <button aria-label="资源管理器"><svg viewBox="0 0 24 24"><path d="M1 4H10L12 6H23V21H1Z" fill="#fbd978"/><path d="M5 22V15H19V22H15V18H9V22Z" fill="#36a3e4"/></svg></button>
    <button class="run" aria-label="应用"><svg viewBox="0 0 24 24"><path d="M21 1Q16 3 13 2Q2 2 1 13Q1 23 12 23Q21 22 21 12Q18 9 13 12Q17 13 14 17Q8 20 7 12Q7 6 14 7Q20 8 23 1Q23 0 21 1Z" fill="#159aee"/></svg></button>
    <button class="on" aria-label="广联达"><svg viewBox="0 0 16 16"><use href="#app"/></svg></button>
    <button aria-label="便笺"><svg viewBox="0 0 24 24"><rect width="24" height="24" rx="2" fill="#f5a11c"/><path d="M3 7L17 4L20 18L6 22Z" fill="#fff" stroke="#9c5712"/><path d="M6 11L16 8M7 14L17 11M8 17L15 15" stroke="#a66"/><path d="M20 1L23 3L13 17L10 18L11 15Z" fill="#e86414" stroke="#732f08"/></svg></button>
    <button class="run" aria-label="浏览器"><svg viewBox="0 0 24 24"><circle cx="12" cy="12" r="11" fill="#58b832" stroke="#e7ffd9"/><path d="M5 13Q6 6 12 6Q18 6 19 12H9Q10 17 16 15L19 14Q17 20 12 19Q6 19 5 13ZM9 10H15Q12 7 9 10Z" fill="#fff"/></svg></button>
    <button class="run" aria-label="帮助"><svg viewBox="0 0 24 24"><path d="M3 9H12V22H3Z" fill="#eee"/><path d="M5 12H10M5 15H10M5 18H10" stroke="#333"/><path d="M11 6V3H19V9H15V13" fill="none" stroke="#ffe600" stroke-width="3"/><path d="M13.500 15H17V18H13.500Z" fill="#ffe600"/></svg></button>
  </div>
  <div class="cpu"><span>37%</span><span>CPU使用</span></div>
  <div class="tray">
    <svg viewBox="0 0 16 16"><path d="M2 11L8 5L14 11" fill="none" stroke="#fff" stroke-width="1.300"/></svg>
    <svg viewBox="0 0 16 16"><path d="M5 5.500H14V11.500H4V8M15 7V10" fill="none" stroke="#fff" stroke-width="1.200"/><path d="M6 7H12V10H6Z" fill="#fff"/><path d="M1 2V5H5V2M3 5V9" fill="none" stroke="#fff"/></svg>
    <svg viewBox="0 0 16 16"><path d="M2 14Q3 4 14 3M5 14Q6 8 14 7M9 14Q10 11 14 10.500" fill="none" stroke="#aaa" stroke-width="1.300"/><circle cx="13" cy="13" r="1.300" fill="#fff"/></svg>
    <svg viewBox="0 0 16 16"><path d="M1 6H4L7 3V13L4 10H1Z" fill="none" stroke="#fff"/><path d="M9 6Q10 8 9 10M11 4Q13.500 8 11 12M13 3Q16.500 8 13 13" fill="none" stroke="#ccc"/></svg>
    <svg class="kbd" viewBox="0 0 24 14"><path d="M1 1H23V13H1Z" fill="none" stroke="#fff"/><path d="M4 4.500H21M4 7.500H21" stroke="#fff" stroke-dasharray="1.500 1.500"/><path d="M6 10.500H18" stroke="#fff"/></svg>
    <span>中</span>
    <svg viewBox="0 0 28 28"><use href="#sogou"/></svg>
  </div>
  <div class="clock"><span>11:58</span><span>2017/9/8</span></div>
  <button class="notice" aria-label="通知"><svg viewBox="0 0 18 18"><path d="M1 1H17V13H9L6 16V13H1Z" fill="#fff"/><path d="M4 4.500H14M4 7.500H14M4 10.500H9" stroke="#000"/></svg><b>20</b></button>
</div>

<div class="ime"><svg class="logo"><use href="#sogou"/></svg><div class="imebar"><b>中</b>
  <svg viewBox="0 0 16 16"><circle cx="4" cy="5" r="2" fill="none" stroke="#1b72c8" stroke-width="1.200"/><path d="M11 8H14V11L11 14Z" fill="#1b72c8"/></svg>
  <svg viewBox="0 0 16 16"><rect x="5" y="1" width="6" height="9" rx="3" fill="#1b72c8"/><path d="M2.500 7Q3 12 8 12Q13 12 13.500 7M8 12V15M5 15H11" fill="none" stroke="#1b72c8" stroke-width="1.400"/></svg>
  <svg viewBox="0 0 16 16"><rect y="2" width="16" height="12" rx="1" fill="#1b72c8"/><path d="M2 5H14M2 8H14" stroke="#fff" stroke-width="1.500" stroke-dasharray="2 1"/><path d="M4 11.500H12" stroke="#fff"/></svg>
  <svg viewBox="0 0 16 16"><circle cx="6" cy="4" r="3" fill="#b8c2cf"/><path d="M0 14Q1 8 6 8L9 9V14Z" fill="#b8c2cf"/><path d="M8 10L9 9V15M11 9.500H15L12.500 15" fill="none" stroke="#8d9aac" stroke-width="1.300"/></svg>
  <svg viewBox="0 0 16 16"><path d="M5 2Q8 4 11 2L16 5L14 8L12 7V14H4V7L2 8L0 5Z" fill="#1b72c8"/></svg>
  <svg viewBox="0 0 16 16"><path d="M2 14L9 7" stroke="#1b72c8" stroke-width="3" stroke-linecap="round"/><path d="M13 1L10 4L12 6L15 3Q17 8 11 9Q7 9 7 5Q8 1 13 1Z" fill="#1b72c8"/></svg>
</div></div>
<div class="ball">75</div>
<svg class="mark mark-row" viewBox="0 0 424 70"><ellipse cx="212" cy="35" rx="210" ry="33" /></svg>
<svg class="mark mark-hint" viewBox="0 0 808 176"><ellipse cx="404" cy="88" rx="402" ry="86" /></svg>
</div>
</body>
</html>
```
FILE: styles.css
```css
* { box-sizing: border-box; }
body { margin: 0; overflow: hidden; font: 12px/16px "Noto Sans", "Noto Sans CJK SC", sans-serif; color: #000; background: #f0f0f0; }
button, input, select { font: inherit; color: inherit; margin: 0; padding: 0; border: 0; background: none; border-radius: 0; }
ul { list-style: none; margin: 0; padding: 0; }
svg { display: block; flex: none; }
.defs { position: absolute; width: 0; height: 0; }
.desktop { position: relative; display: flex; flex-direction: column; height: 100vh; overflow: hidden; }
.i16 { width: 16px; height: 16px; }
.tw { width: 10px; height: 10px; color: #444; }

.titlebar { display: flex; align-items: center; gap: 5px; height: 23px; padding-left: 2px; background: #fff; flex: none; }
.titlebar h1 { margin: 0; font: 400 12px/16px Inter, "Noto Sans CJK SC", sans-serif; white-space: nowrap; }
.winctl { display: flex; margin-left: auto; }
.winctl button { width: 46px; height: 20px; display: grid; place-items: center; }
.winctl button:nth-child(2) svg { margin-right: 4px; }
.winctl button:last-child svg { margin-right: 4px; }
.winctl svg { width: 12px; height: 12px; }

.menubar { display: flex; align-items: center; height: 31px; flex: none; white-space: nowrap; }
.menus { display: flex; gap: 11px; padding-left: 7px; }
.tool { display: flex; align-items: center; gap: 4px; white-space: nowrap; flex: none; }
.car { width: 5px; height: 3px; }
.far { margin-left: 4px; }
.off { color: #808080; }
.change { margin: 0 6px 0 12px; }
.tip { flex: 187 1 0; margin-left: 6px; height: 29px; line-height: 29px; padding-left: 28px; color: #6b3300; text-decoration: none; background: linear-gradient(#fbfbfb, #f1f1f1); }
.account { flex: 240 1 0; display: flex; align-items: center; gap: 8px; height: 29px; margin-left: 2px; padding: 0 4px; background: linear-gradient(#fbfbfb, #f1f1f1); }
.account .tool { gap: 4px; }
.account .tool:first-child { margin-left: -12px; }
.bell { margin-left: 4px; width: 14px; }
.more { margin: 0 0 10px auto; font-size: 14px; line-height: 14px; font-weight: 700; }

.toolrow { display: flex; gap: 3px; height: 30px; flex: none; }
.strip { display: flex; align-items: center; gap: 7px; height: 28px; border-radius: 3px; background: linear-gradient(#fcfcfc, #eee); }
.quick { flex: 145 1 0; padding-left: 5px; gap: 8px; }
.draw { flex: 545 1 0; padding-left: 3px; }
.view { flex: 660 1 0; padding: 0 2px; gap: 7px; }
.view .tool { gap: 3px; }
.view .sep { margin-right: 1px; }
.sep { width: 1px; height: 20px; background: #b4b4b4; flex: none; }
.sigma { width: 16px; font: 700 14px "Liberation Serif", serif; text-align: center; }
.view .boxed { height: 24px; padding: 0 2px 0 1px; border: 1px solid #777; }

.workspace { display: flex; flex: 1; min-height: 0; }
.modules { width: 165px; display: flex; flex-direction: column; flex: none; padding-bottom: 1px; margin-right: 6px; }
.panelhead { display: flex; align-items: center; gap: 8px; height: 16px; margin-bottom: 1px; padding-right: 4px; background: #0054e3; color: #fff; font-size: 13px; flex: none; }
.panelhead span { margin-right: auto; }
.panelhead svg { width: 10px; height: 12px; }
.wide { height: 22px; flex: none; border: 1px solid #a0a0a0; border-bottom-width: 0; background: #f0f0f0; }
.wide:last-child { border-bottom-width: 1px; }
.expand { height: 28px; flex: none; padding: 5px 6px; border: 1px solid #a0a0a0; background: linear-gradient(#fefefe, #ececec); }
.expand svg { width: 42px; height: 18px; }
.treebox { flex: 1; min-height: 0; display: flex; flex-direction: column; margin-bottom: 1px; padding: 0 2px 1px 0; border: 1px solid #828790; border-width: 1px 1px 2px 2px; background: #fff; }
.treemain { display: flex; flex: 1; min-height: 0; overflow: hidden; }
.tree { flex: 1; min-width: 0; white-space: nowrap; }
.tree, .list, table, .status { font-family: "Liberation Serif", "Noto Sans CJK SC", serif; }
.tree li { display: flex; align-items: center; height: 16px; overflow: hidden; }
.leaf { gap: 4px; padding-left: 43px; background: repeating-linear-gradient(#888 0 1px, transparent 1px 2px) 32px 0 / 1px 16px no-repeat, repeating-linear-gradient(90deg, #888 0 1px, transparent 1px 2px) 32px 8px / 11px 1px no-repeat; }
.leaf.bar { background: repeating-linear-gradient(#888 0 1px, transparent 1px 2px) 13px 0 / 1px 16px no-repeat, repeating-linear-gradient(#888 0 1px, transparent 1px 2px) 32px 0 / 1px 16px no-repeat, repeating-linear-gradient(90deg, #888 0 1px, transparent 1px 2px) 32px 8px / 11px 1px no-repeat; }
.leaf.last { background-size: 1px 8px, 11px 1px; }
.leaf.bar.last { background-size: 1px 16px, 1px 8px, 11px 1px; }
.current { display: flex; gap: 4px; padding-right: 4px; background: #d9d9d9; }
.cols { width: 13px; height: 15px; margin-left: -2px; }
.branch { padding-left: 7px; gap: 5px; }
.branch .fold { width: 16px; height: 14px; margin: 0 0 0 2px; }
.closed, .rgt { transform: rotate(-90deg); }
.closed { color: #aaa; }
.lft { transform: rotate(90deg); }
.flip { transform: rotate(180deg); }
.vscroll { width: 15px; display: grid; grid-template-rows: 16px 221fr 213fr 16px; place-items: center; background: #f0f0f0; }
.vscroll i { grid-row: 3; width: 15px; height: 100%; background: #cdcdcd; }
.vscroll .tw:last-child { grid-row: 4; }
.hscroll { height: 17px; flex: none; display: grid; grid-template-columns: 17px 103fr 24px 16px; place-items: center; background: #f0f0f0; }
.hscroll i { height: 15px; width: 100%; background: #cdcdcd; }

.content { flex: 1; min-width: 0; display: flex; flex-direction: column; }
.edit { flex: none; padding-left: 4px; }
.edit .tool .car { margin-left: -1px; }
.edit .sep { margin: 0 -1px; }
.floor { display: flex; align-items: center; gap: 5px; margin-left: -4px; }
.floor select { width: 51px; height: 24px; padding-left: 3px; background: #fff; appearance: none; }
.panes { flex: 1; min-height: 0; display: flex; }
.members { width: 183px; flex: none; display: flex; flex-direction: column; padding-top: 4px; border-right: 1px solid #a0a0a0; background: #fff; margin: 0 4px 0 0; }
.search { display: flex; flex: none; height: 25px; padding-left: 1px; }
.search input { width: 157px; padding: 0 2px; border: 1px solid #6a6a6a; }
.search input::placeholder { color: #777; opacity: 1; }
.search button { flex: 1; display: grid; place-items: center; }
.search svg { width: 16px; height: 16px; }
.list { flex: 1; min-height: 0; margin-bottom: 1px; padding-top: 1px; border: 1px solid #828790; border-top-width: 2px; }
.list li { display: flex; height: 16px; padding-left: 42px; background: repeating-linear-gradient(#888 0 1px, transparent 1px 2px) 31px 0 / 1px 16px no-repeat, repeating-linear-gradient(90deg, #888 0 1px, transparent 1px 2px) 31px 8px / 12px 1px no-repeat; }
.list li.last { background-size: 1px 8px, 12px 1px; }
.list .root { align-items: center; padding-left: 6px; gap: 4px; background: none; }
.list .root .i16 { width: 14px; height: 14px; margin: 0 2px 0 4px; }
.list span { display: flex; align-items: center; padding: 0 5px 0 1px; gap: 7px; }
.list span svg { width: 11px; height: 11px; margin-left: 1px; }
.list .sel { background: #316ac5; }

.props { flex: 1; min-width: 0; display: flex; flex-direction: column; padding-right: 4px; margin-bottom: 2px; border-left: 1px solid #d9d9d9; background: #fff; }
.tabs { display: flex; height: 20px; flex: none; background: linear-gradient(#f0f0f0, #fafafa); border-bottom: 1px solid #d9d9d9; }
.tab { height: 20px; padding: 0 7px 0 6px; border-right: 1px solid #d9d9d9; background: #fff; }
.sheet { flex: 1; min-height: 0; margin: 4px 0 0 3px; border: 1px solid #a0a0a0; }
table { border-collapse: separate; border-spacing: 0; table-layout: fixed; width: 370px; margin-top: 1px; }
tr { height: 19px; }
thead tr { height: 23px; }
th, td { height: 19px; padding: 0; border: 1px solid #c0c0c0; border-width: 0 1px 1px 0; font-weight: 400; line-height: 16px; white-space: nowrap; overflow: hidden; text-align: left; }
th { text-align: center; background: linear-gradient(#fff, #f0f0f0); }
.num { width: 22px; }
.name { width: 191px; }
.val { width: 126px; background: linear-gradient(#fbdc9c, #f0bd5c); color: #600040; }
td:nth-child(2) { padding-left: 20px; }
td:nth-child(3) { padding-left: 2px; }
td:nth-child(4) { text-align: center; }
.link { color: #00f; }
.group { color: #808080; }
.group button { float: left; width: 13px; height: 13px; margin: 2px 0 0 -18px; border: 1px solid #a0a0a0; }
.active th { background: #ffd58c; color: #603060; }
.active td:nth-child(2) { background: #0078d7; color: #fff; }
.active td:nth-child(3) { background: #d9e9f8; }
table input { display: block; appearance: none; width: 13px; height: 13px; margin: 0 auto; border: 1px solid #222; background: #fff; }
.rb { display: inline-block; width: 11px; height: 10px; margin: 0 1px 0 2px; vertical-align: -1px; }

.status { display: flex; gap: 3px; height: 23px; padding-top: 2px; flex: none; white-space: nowrap; line-height: 20px; }
.status span { border: 1px solid #d7d7d7; background: linear-gradient(#fff, #efefef); overflow: hidden; }
.s1 { width: 148px; }
.s2 { width: 77px; }
.s3 { width: 98px; }
.s4 { width: 46px; }
.s5 { flex: 1; }

.taskbar { display: flex; height: 40px; flex: none; background: #000a0e; color: #fff; }
.start { width: 48px; display: grid; place-items: center; background: #000; flex: none; }
.start svg { width: 16px; height: 16px; }
.cortana { display: flex; align-items: center; gap: 5px; width: 344px; padding: 0 14px 0 9px; background: #333; flex: none; }
.cortana svg { width: 22px; height: 22px; }
.cortana input { flex: 1; min-width: 0; font-size: 14px; }
.cortana input::placeholder { color: #999; opacity: 1; }
.cortana .mic { width: 12px; height: 18px; }
.apps { display: flex; gap: 1px; padding-left: 2px; }
.pinned { padding-left: 6px; }
.apps button { width: 48px; display: grid; place-items: center; border-bottom: 2px solid transparent; border-top: 2px solid transparent; }
.apps .run { border-bottom-color: #76b9ed; }
.apps .on { background: #454b4e; }
.apps svg { width: 23px; height: 23px; }
.cpu, .clock { display: flex; flex-direction: column; align-items: center; padding-top: 3px; line-height: 18px; }
.cpu { margin-left: auto; width: 60px; }
.tray { display: flex; align-items: center; gap: 8px; margin-left: 12px; font-size: 13px; }
.tray svg { width: 16px; height: 16px; }
.tray .kbd { width: 24px; height: 14px; }
.tray span { margin: 0 3px; }
.clock { width: 64px; margin-left: 14px; }
.notice { position: relative; width: 58px; display: grid; place-items: center; }
.notice svg { width: 17px; height: 17px; margin-right: 8px; }
.notice b { position: absolute; left: 22px; top: 17px; width: 20px; height: 18px; border-radius: 9px; background: #333; border: 1px solid #777; line-height: 16px; }

.ime { position: absolute; right: 0; bottom: 40px; display: flex; align-items: flex-end; }
.logo { width: 28px; height: 28px; margin-right: -2px; }
.imebar { display: flex; align-items: center; gap: 6px; height: 24px; padding: 0 4px 0 6px; background: #fff; border: 1px solid #bcd3ea; color: #1b72c8; }
.imebar b { font-size: 15px; }
.imebar svg { width: 16px; height: 16px; }
.ball { position: absolute; left: 945px; top: -26px; width: 45px; height: 45px; border-radius: 50%; border: 2px solid #e8e8e8; background: linear-gradient(#5fd37a, #3cc158); box-shadow: 0 2px 5px #888, inset 0 0 0 1px #1ea845; color: #fff; font-weight: 700; line-height: 14px; text-align: center; padding-top: 25px; }
.mark { position: absolute; fill: none; stroke: #f00; stroke-width: 3px; pointer-events: none; }
.mark-row { left: 339px; top: 243px; width: 424px; height: 70px; }
.mark-hint { left: 346px; top: 593px; width: 808px; height: 176px; }
```
